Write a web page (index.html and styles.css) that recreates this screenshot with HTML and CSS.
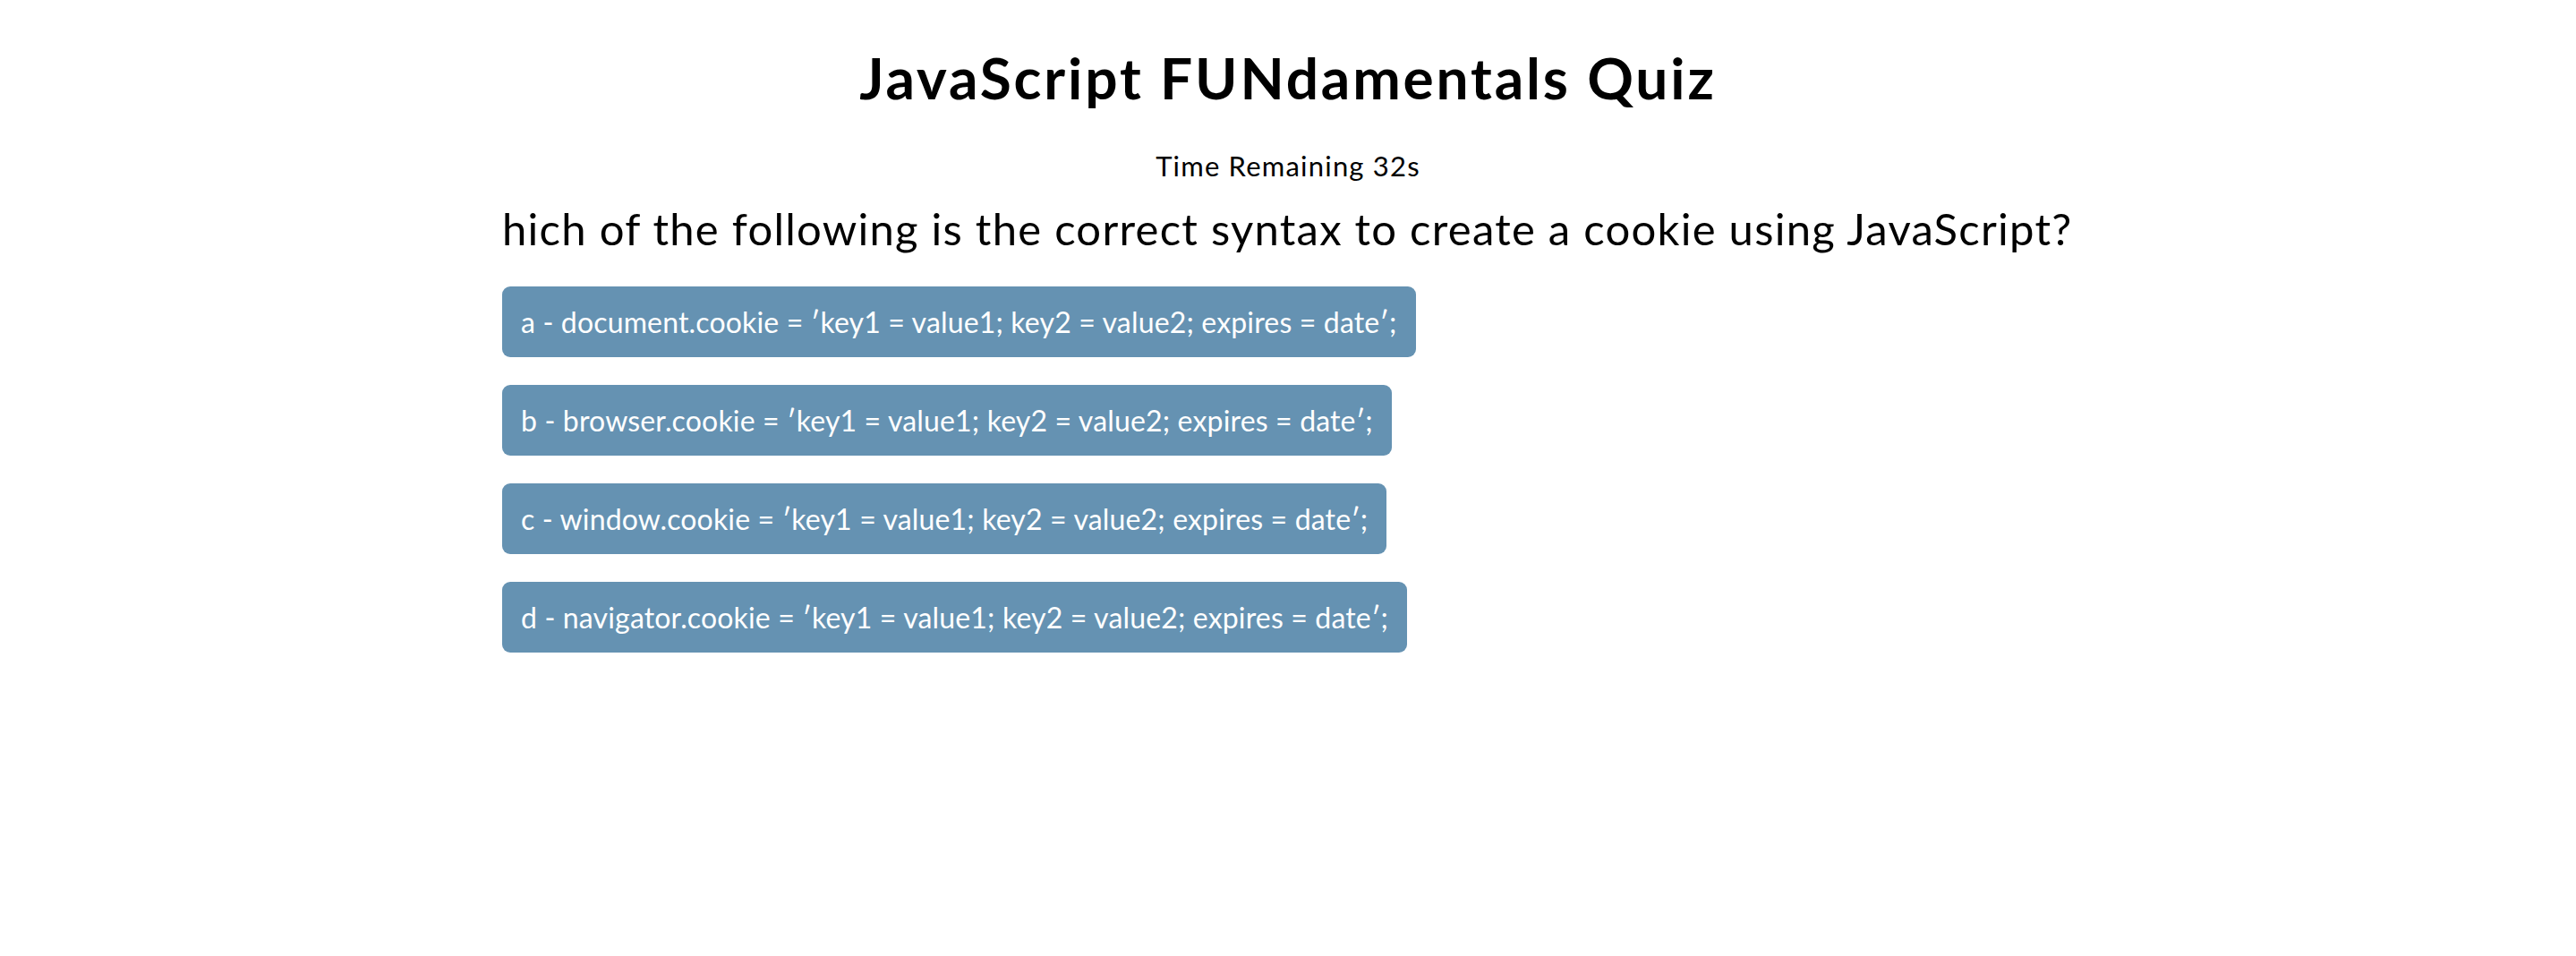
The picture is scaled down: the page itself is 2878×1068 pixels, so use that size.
FILE: index.html
```html
<!DOCTYPE html>
<html lang="en">
<head>
<meta charset="utf-8">
<title>JavaScript FUNdamentals Quiz</title>
<link rel="stylesheet" href="styles.css">
</head>
<body>
<main class="quiz">
  <h1 class="quiz-title">JavaScript FUNdamentals Quiz</h1>
  <p class="timer">Time Remaining 32s</p>
  <h2 class="question">hich of the following is the correct syntax to create a cookie using JavaScript?</h2>
  <div class="choices">
    <button class="choice">a - document.cookie = ′key1 = value1; key2 = value2; expires = date′;</button>
    <button class="choice">b - browser.cookie = ′key1 = value1; key2 = value2; expires = date′;</button>
    <button class="choice">c - window.cookie = ′key1 = value1; key2 = value2; expires = date′;</button>
    <button class="choice">d - navigator.cookie = ′key1 = value1; key2 = value2; expires = date′;</button>
  </div>
</main>
</body>
</html>
```

FILE: styles.css
```css
body {
  margin: 8px;
  background: #ffffff;
  color: #000000;
  font-family: Lato, "Open Sans", sans-serif;
}

.quiz {
  width: 1756px;
  margin: 0 auto;
  display: flex;
  flex-direction: column;
}

.quiz-title {
  margin: 41px 0 0;
  font-size: 64px;
  line-height: 1.2;
  font-weight: 700;
  letter-spacing: 2.85px;
  text-align: center;
}

.timer {
  margin: 41px 0 0;
  font-size: 31px;
  line-height: 1.2;
  font-weight: 400;
  letter-spacing: 1.2px;
  text-align: center;
}

.question {
  margin: 22px 0 0;
  font-size: 49px;
  line-height: 1.2;
  font-weight: 400;
  letter-spacing: 1.25px;
}

.choices {
  margin-top: 35px;
  display: flex;
  flex-direction: column;
  align-items: flex-start;
  gap: 31px;
}

.choice {
  font-family: inherit;
  font-size: 32px;
  line-height: 39px;
  letter-spacing: 0.16px;
  padding: 20px 21px;
  border: none;
  border-radius: 9px;
  background: #6592b2;
  color: #ffffff;
  text-align: left;
  cursor: pointer;
}
```
